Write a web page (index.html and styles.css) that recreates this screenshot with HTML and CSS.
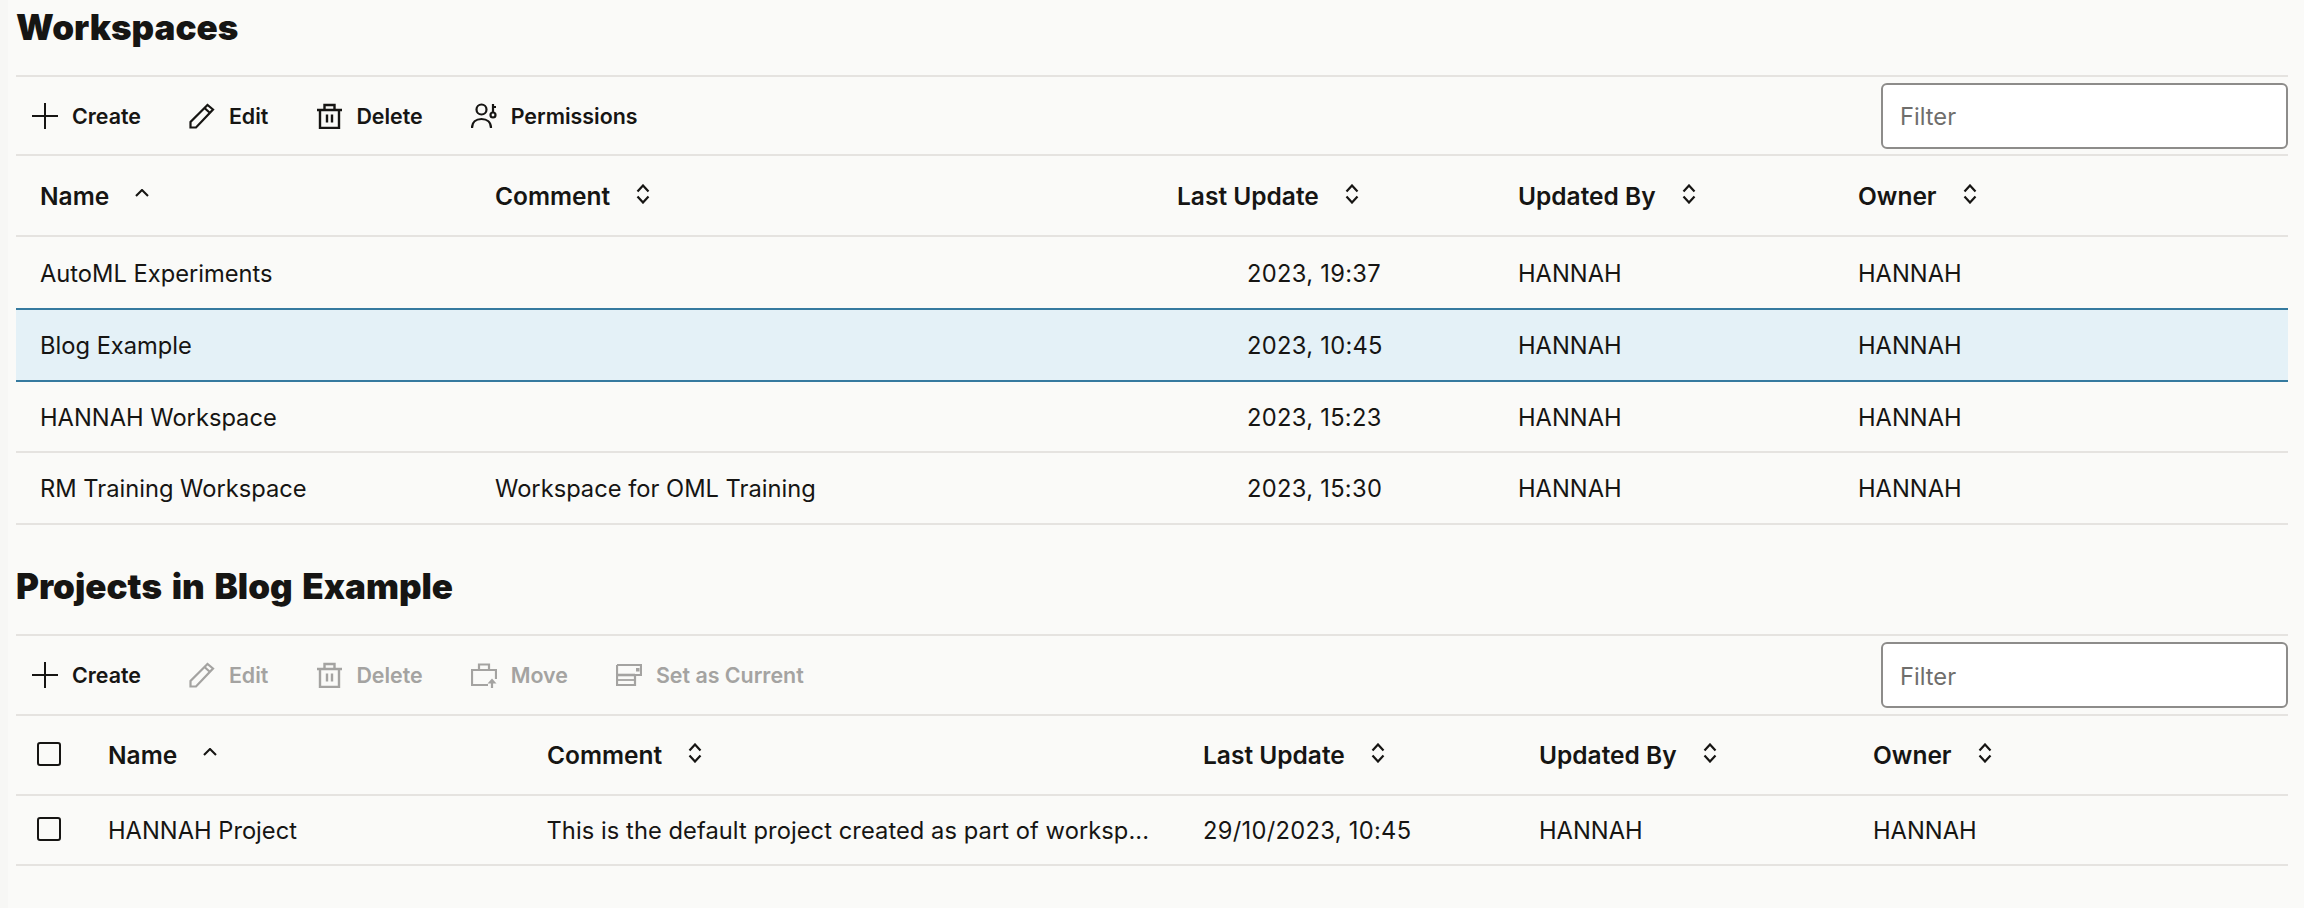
FILE: index.html
```html
<!DOCTYPE html>
<html lang="en">
<head>
<meta charset="utf-8">
<title>Workspaces</title>
<link rel="stylesheet" href="styles.css">
</head>
<body>
<svg class="sprite" width="0" height="0" aria-hidden="true">
  <symbol id="i-plus" viewBox="0 0 26 26"><path d="M13 0v26M0 13h26" fill="none" stroke="currentColor" stroke-width="2"/></symbol>
  <symbol id="i-edit" viewBox="0 0 26 26"><path d="M1.500 24.500v-5.500L18.500 2l5.500 4.500L7 24.500zM15.500 5l5.500 5" fill="none" stroke="currentColor" stroke-width="2.200"/></symbol>
  <symbol id="i-trash" viewBox="0 0 26 26"><path d="M1 7h25M8.500 7V2h10v5M4 7v18h19V7M11 11.500v8M16 11.500v8" fill="none" stroke="currentColor" stroke-width="2.400"/></symbol>
  <symbol id="i-perm" viewBox="0 0 26 26"><circle cx="10.500" cy="6.500" r="5" fill="none" stroke="currentColor" stroke-width="2.200"/><path d="M1 25c0-6 4-9 9.500-9s9.500 3 9.500 9" fill="none" stroke="currentColor" stroke-width="2.200"/><circle cx="22" cy="12" r="2.500" fill="none" stroke="currentColor" stroke-width="2.200"/><path d="M22 1v8.500M22 4h3" fill="none" stroke="currentColor" stroke-width="2.200"/></symbol>
  <symbol id="i-move" viewBox="0 0 26 26"><path d="M17 23H1V8h24v9M8 8V2.500h10V8" fill="none" stroke="currentColor" stroke-width="2.200"/><path d="M21 26v-6" stroke="currentColor" stroke-width="2.200"/><path d="M16.500 21.500L21 16.500l4.500 5z" fill="currentColor"/></symbol>
  <symbol id="i-current" viewBox="0 0 26 26"><path d="M1 3h24v10H19M1 3v20h18V13" fill="none" stroke="currentColor" stroke-width="2.200"/><path d="M1 13h18" stroke="currentColor" stroke-width="2.600"/><path d="M1 18h18" stroke="currentColor" stroke-width="1.800"/><path d="M20 6h3.500v3.500H20z" fill="currentColor"/></symbol>
  <symbol id="i-asc" viewBox="0 0 14 8"><path d="M1 7l6-6 6 6" fill="none" stroke="currentColor" stroke-width="2.100"/></symbol>
  <symbol id="i-both" viewBox="0 0 14 20"><path d="M1.500 7.500L7 1.500l5.500 6M1.500 12.500l5.500 6 5.500-6" fill="none" stroke="currentColor" stroke-width="2.200"/></symbol>
</svg>

<section class="panel">
  <h1 class="panel-title">Workspaces</h1>
  <div class="toolbar">
    <div class="actions">
      <button class="action"><svg class="action-icon"><use href="#i-plus"/></svg>Create</button>
      <button class="action"><svg class="action-icon"><use href="#i-edit"/></svg>Edit</button>
      <button class="action"><svg class="action-icon"><use href="#i-trash"/></svg>Delete</button>
      <button class="action"><svg class="action-icon"><use href="#i-perm"/></svg>Permissions</button>
    </div>
    <input class="filter" placeholder="Filter">
  </div>
  <table class="grid grid-workspaces">
    <colgroup><col class="w-name"><col class="w-comment"><col class="w-date"><col class="w-by"><col class="w-owner"></colgroup>
    <thead>
      <tr>
        <th><span class="head">Name<svg class="sort-asc"><use href="#i-asc"/></svg></span></th>
        <th><span class="head">Comment<svg class="sort-both"><use href="#i-both"/></svg></span></th>
        <th><span class="head">Last Update<svg class="sort-both"><use href="#i-both"/></svg></span></th>
        <th><span class="head">Updated By<svg class="sort-both"><use href="#i-both"/></svg></span></th>
        <th><span class="head">Owner<svg class="sort-both"><use href="#i-both"/></svg></span></th>
      </tr>
    </thead>
    <tbody>
      <tr class="before-selected"><td>AutoML Experiments</td><td></td><td class="date date-cut">2023, 19:37</td><td>HANNAH</td><td>HANNAH</td></tr>
      <tr class="selected"><td>Blog Example</td><td></td><td class="date date-cut">2023, 10:45</td><td>HANNAH</td><td>HANNAH</td></tr>
      <tr class="after-selected"><td>HANNAH Workspace</td><td></td><td class="date date-cut">2023, 15:23</td><td>HANNAH</td><td>HANNAH</td></tr>
      <tr><td>RM Training Workspace</td><td>Workspace for OML Training</td><td class="date date-cut">2023, 15:30</td><td>HANNAH</td><td>HANNAH</td></tr>
    </tbody>
  </table>
</section>

<section class="panel panel-second">
  <h1 class="panel-title">Projects in Blog Example</h1>
  <div class="toolbar">
    <div class="actions">
      <button class="action"><svg class="action-icon"><use href="#i-plus"/></svg>Create</button>
      <button class="action is-disabled"><svg class="action-icon"><use href="#i-edit"/></svg>Edit</button>
      <button class="action is-disabled"><svg class="action-icon"><use href="#i-trash"/></svg>Delete</button>
      <button class="action is-disabled"><svg class="action-icon"><use href="#i-move"/></svg>Move</button>
      <button class="action is-disabled"><svg class="action-icon"><use href="#i-current"/></svg>Set as Current</button>
    </div>
    <input class="filter" placeholder="Filter">
  </div>
  <table class="grid grid-projects">
    <colgroup><col class="p-check"><col class="p-name"><col class="p-comment"><col class="p-date"><col class="p-by"><col class="p-owner"></colgroup>
    <thead>
      <tr>
        <th class="check-cell"><span class="check"></span></th>
        <th><span class="head">Name<svg class="sort-asc"><use href="#i-asc"/></svg></span></th>
        <th><span class="head">Comment<svg class="sort-both"><use href="#i-both"/></svg></span></th>
        <th><span class="head">Last Update<svg class="sort-both"><use href="#i-both"/></svg></span></th>
        <th><span class="head">Updated By<svg class="sort-both"><use href="#i-both"/></svg></span></th>
        <th><span class="head">Owner<svg class="sort-both"><use href="#i-both"/></svg></span></th>
      </tr>
    </thead>
    <tbody>
      <tr>
        <td class="check-cell"><span class="check"></span></td>
        <td>HANNAH Project</td>
        <td class="cut-comment">This is the default project created as part of worksp...</td>
        <td class="date">29/10/2023, 10:45</td>
        <td>HANNAH</td>
        <td>HANNAH</td>
      </tr>
    </tbody>
  </table>
</section>
</body>
</html>
```

FILE: styles.css
```css
* { box-sizing: border-box; }

html, body { margin: 0; }

body {
  height: 908px;
  overflow: hidden;
  padding: 3px 16px 0;
  background: linear-gradient(90deg, #f7f7f5 8px, #fafaf8 8px);
  color: #161513;
  font-family: Inter, "Liberation Sans", sans-serif;
  font-size: 23.7px;
}

.sprite { position: absolute; }

.panel-second { margin-top: 37px; }

.panel-title {
  height: 72px;
  margin: 0;
  font-size: 35px;
  line-height: 48px;
  font-weight: 900;
  word-spacing: 2.7px;
}

.toolbar {
  display: flex;
  align-items: center;
  justify-content: space-between;
  height: 81px;
  border-top: 2px solid #e5e3e0;
  border-bottom: 2px solid #e5e3e0;
}

.panel-second .toolbar { height: 82px; }

.actions {
  display: flex;
  gap: 48px;
  padding-left: 16px;
}

.action {
  display: flex;
  align-items: center;
  gap: 14px;
  padding: 0;
  border: 0;
  background: none;
  color: #161513;
  font: 600 21.4px Inter, "Liberation Sans", sans-serif;
}

.action.is-disabled { color: #a4a3a1; }

.action-icon {
  width: 26px;
  height: 26px;
}

.filter {
  width: 407px;
  height: 66px;
  padding: 2px 17px 0;
  border: 2px solid #8d8c8a;
  border-radius: 6px;
  background: #fff;
  color: #161513;
  font: 400 23.7px Inter, "Liberation Sans", sans-serif;
}

.filter::placeholder { color: #6f6e6c; opacity: 1; }

.grid {
  width: 100%;
  table-layout: fixed;
  border-collapse: separate;
  border-spacing: 0;
}

.grid th,
.grid td {
  padding: 0 24px;
  text-align: left;
  white-space: nowrap;
  border-bottom: 2px solid #e5e3e0;
}

.grid th {
  height: 81px;
  font-weight: 600;
  font-size: 24.5px;
}

.grid td {
  height: 72px;
  padding-top: 1px;
  font-weight: 400;
}

.grid .before-selected td { height: 73px; border-bottom-color: #357a9f; }
.grid .after-selected td { height: 71px; }

.head {
  display: inline-flex;
  align-items: center;
  gap: 26px;
}

.sort-asc { width: 14px; height: 8px; margin-top: -6px; }
.sort-both { width: 14px; height: 20px; margin-top: -4px; }

.selected td {
  background: #e4f1f7;
  border-bottom-color: #357a9f;
}

.grid td.date { letter-spacing: 0.3px; }
.grid td.date-cut { padding-left: 94px; }
.grid td.cut-comment { letter-spacing: 0.06px; padding-left: 23.5px; }

.w-name { width: 455px; }
.w-comment { width: 682px; }
.w-date { width: 341px; }
.w-by { width: 340px; }
.w-owner { width: 454px; }

.grid-projects th { height: 80px; }
.grid-projects td { height: 70px; }

.p-check { width: 68px; }
.p-name { width: 439px; }
.p-comment { width: 656px; }
.p-date { width: 336px; }
.p-by { width: 334px; }
.p-owner { width: 439px; }

.grid .check-cell { padding: 0 0 2px 21px; }

.check {
  display: block;
  width: 24px;
  height: 24px;
  border: 2px solid #161513;
  border-radius: 3px;
}
```
